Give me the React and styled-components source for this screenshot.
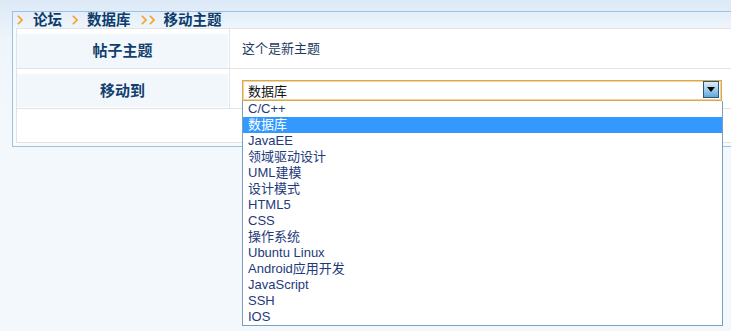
import React from "react";
import styled, { createGlobalStyle } from "styled-components";

const GlobalStyle = createGlobalStyle`
  html, body {
    margin: 0;
    padding: 0;
  }
  body {
    font-family: "Liberation Sans", "Noto Sans CJK SC", sans-serif;
    font-size: 13px;
  }
`;

const Page = styled.div`
  width: 731px;
  height: 331px;
  overflow: hidden;
  background: linear-gradient(#dce9f6 0px, #eef5fb 40px, #f3f8fd 120px, #f3f8fd 100%);
  padding: 11px 0 0 12px;
  box-sizing: border-box;
`;

const Panel = styled.div`
  width: 740px;
  border: 1px solid #9dc1e3;
  background: #f8fbfe;
  padding: 0 0 3px 3px;
`;

const Crumbs = styled.div`
  display: flex;
  align-items: center;
  height: 16px;
  margin-left: -3px;
  padding-left: 4px;
  background: linear-gradient(#e4eef9, #eef5fc);
  font-weight: bold;
  font-size: 14.5px;
  color: #0d3d6b;
  line-height: 16px;
`;

const Arrow = styled.span`
  display: flex;
  align-items: center;
  margin: 0 ${(p) => p.$gap || 10}px 0 0;
`;

const Crumb = styled.span`
  margin-right: 10px;
`;

const Table = styled.div`
  background: #fff;
  border: 1px solid #e3e3e3;
  border-right: none;
`;

const Row = styled.div`
  display: flex;
  height: ${(p) => p.$h}px;
  padding-top: ${(p) => p.$top || 0}px;
  box-sizing: border-box;
  border-bottom: ${(p) => (p.$last ? "none" : "1px solid #e3e3e3")};
`;

const Label = styled.div`
  flex: 0 0 212px;
  height: ${(p) => p.$h}px;
  box-sizing: border-box;
  padding-bottom: 3px;
  background: #f2f7fc;
  background-clip: padding-box;
  color: #12406e;
  font-weight: bold;
  font-size: 15px;
  display: flex;
  align-items: center;
  justify-content: center;
  border-right: 1px solid #fff;
`;

const Value = styled.div`
  flex: 1;
  display: flex;
  align-items: ${(p) => (p.$top ? "flex-start" : "center")};
  padding-left: 12px;
  color: #1c3c5e;
  border-left: 1px solid #e6e6e6;
  margin-top: -5px;
  padding-top: ${(p) => (p.$top ? 5 : 0)}px;
  padding-bottom: ${(p) => (p.$top ? 0 : 3)}px;
  position: relative;
`;

const SelectWrap = styled.div`
  position: relative;
  margin-top: 6px;
  width: 480px;
`;

const SelectBox = styled.div`
  height: 21px;
  box-sizing: border-box;
  border: 1px solid #d9a850;
  box-shadow: inset 0 0 0 1px #f1d49c;
  display: flex;
  align-items: center;
  padding: 0 0 1px 5px;
  color: #111;
`;

const DropButton = styled.div`
  position: absolute;
  right: 3px;
  top: 1px;
  width: 14px;
  height: 15px;
  border: 1px solid #2f5575;
  background: linear-gradient(#dcecf8, #9ccbea 55%, #5ea9d9);
  display: flex;
  align-items: center;
  justify-content: center;
`;

const List = styled.div`
  position: absolute;
  left: 0;
  top: 21px;
  width: 479px;
  border: 1px solid #7c9ec2;
  border-top: none;
  background: #fff;
  z-index: 2;
`;

const Option = styled.div`
  height: 16px;
  line-height: 16px;
  padding-left: 5px;
  color: ${(p) => (p.$selected ? "#fff" : "#1e3a7c")};
  background: ${(p) => (p.$selected ? "#3399ff" : "transparent")};
  white-space: nowrap;
`;

const options = [
  "C/C++",
  "数据库",
  "JavaEE",
  "领域驱动设计",
  "UML建模",
  "设计模式",
  "HTML5",
  "CSS",
  "操作系统",
  "Ubuntu Linux",
  "Android应用开发",
  "JavaScript",
  "SSH",
  "IOS",
];

const Chevron = ({ double }) => (
  <svg width={double ? 14 : 6} height="10" viewBox={`0 0 ${double ? 14 : 6} 10`}>
    <path d="M0.8 0.8L5 5L0.8 9.2" fill="none" stroke="#f5a21e" strokeWidth="1.6" />
    {double && (
      <path d="M8.8 0.8L13 5L8.8 9.2" fill="none" stroke="#f5a21e" strokeWidth="1.6" />
    )}
  </svg>
);

export default function App() {
  return (
    <>
      <GlobalStyle />
      <Page>
        <Panel>
          <Crumbs>
            <Arrow $gap={10}>
              <Chevron />
            </Arrow>
            <Crumb>论坛</Crumb>
            <Arrow $gap={9}>
              <Chevron />
            </Arrow>
            <Crumb>数据库</Crumb>
            <Arrow $gap={9}>
              <Chevron double />
            </Arrow>
            <span>移动主题</span>
          </Crumbs>
          <Table>
            <Row $h={40} $top={5}>
              <Label $h={34}>帖子主题</Label>
              <Value>这个是新主题</Value>
            </Row>
            <Row $h={40} $top={5}>
              <Label $h={33}>移动到</Label>
              <Value $top>
                <SelectWrap>
                  <SelectBox>数据库</SelectBox>
                  <DropButton>
                    <svg width="8" height="5" viewBox="0 0 8 5">
                      <path d="M0 0H8L4 5Z" fill="#000" />
                    </svg>
                  </DropButton>
                  <List>
                    {options.map((o) => (
                      <Option key={o} $selected={o === "数据库"}>
                        {o}
                      </Option>
                    ))}
                  </List>
                </SelectWrap>
              </Value>
            </Row>
            <Row $h={33} $last />
          </Table>
        </Panel>
      </Page>
    </>
  );
}
